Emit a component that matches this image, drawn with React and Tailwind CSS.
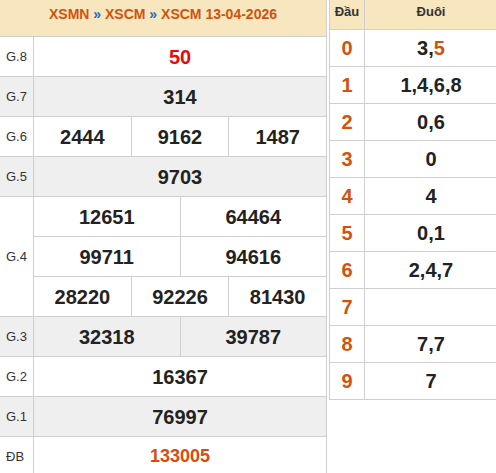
const PRIZES = [
  { label: 'G.8', rows: [['50']], tone: 'text-[#e8090b] text-[20px]' },
  { label: 'G.7', rows: [['314']], alt: true },
  { label: 'G.6', rows: [['2444', '9162', '1487']] },
  { label: 'G.5', rows: [['9703']], alt: true },
  { label: 'G.4', rows: [['12651', '64464'], ['99711', '94616'], ['28220', '92226', '81430']] },
  { label: 'G.3', rows: [['32318', '39787']], alt: true },
  { label: 'G.2', rows: [['16367']] },
  { label: 'G.1', rows: [['76997']], alt: true },
  { label: 'ĐB', rows: [['133005']], tone: 'text-[#dc4a0c] text-[18px]' },
]

const HEADS = [
  ['0', [['3'], ['5', true]]],
  ['1', [['1,4,6,8']]],
  ['2', [['0,6']]],
  ['3', [['0']]],
  ['4', [['4']]],
  ['5', [['0,1']]],
  ['6', [['2,4,7']]],
  ['7', []],
  ['8', [['7,7']]],
  ['9', [['7']]],
]

function PrizeRow({ prize }) {
  const bg = prize.alt ? 'bg-[#efefef]' : 'bg-white'
  const tone = prize.tone || 'text-[#222] text-[20px]'
  return (
    <div className={`flex ${bg}`}>
      <div className="w-[34px] shrink-0 flex items-center pl-[6px] border-r border-b border-[#cfcfcf] text-[13px] text-[#333]">
        {prize.label}
      </div>
      <div className="flex-1 flex flex-col">
        {prize.rows.map((cells, i) => (
          <div key={i} className="h-[40px] flex border-b border-[#cfcfcf]">
            {cells.map((n, j) => (
              <div
                key={n}
                className={`flex-1 basis-0 flex items-center justify-center font-bold ${tone} ${j > 0 ? 'border-l border-[#cfcfcf]' : ''}`}
              >
                {n}
              </div>
            ))}
          </div>
        ))}
      </div>
    </div>
  )
}

export default function App() {
  return (
    <div className="w-[496px] h-[473px] overflow-hidden bg-white flex items-start font-['Liberation_Sans',Arial,sans-serif]">
      {/* Results table */}
      <div className="w-[327px] h-[473px] shrink-0 border-r border-[#cfcfcf]">
        <div className="h-[37px] bg-[#f7e6be] border-b border-[#cfcfcf] pt-[6px] text-center text-[14px] leading-[16px] font-bold text-[#d2520d]">
          XSMN <span className="text-[#1d6db5]">»</span> XSCM <span className="text-[#1d6db5]">»</span> XSCM 13-04-2026
        </div>
        {PRIZES.map(p => <PrizeRow key={p.label} prize={p} />)}
      </div>

      {/* Head / tail table */}
      <div className="ml-[2px] w-[168px] shrink-0 border-l border-[#cfcfcf]">
        <div className="h-[30px] flex bg-[#f7e6be] border-b border-[#cfcfcf] text-[13px] leading-[16px] font-bold text-[#333]">
          <div className="w-[35px] shrink-0 border-r border-[#cfcfcf] pt-[4px] text-center">Đầu</div>
          <div className="flex-1 pt-[4px] text-center">Đuôi</div>
        </div>
        {HEADS.map(([head, tails]) => (
          <div key={head} className="h-[37px] flex border-b border-[#cfcfcf] text-[20px] font-bold">
            <div className="w-[35px] shrink-0 border-r border-[#cfcfcf] flex items-center justify-center text-[#d2520d]">
              {head}
            </div>
            <div className="flex-1 flex items-center justify-center text-[#222]">
              {tails.map(([t, hot], i) => (
                <span key={i}>
                  {i > 0 && ','}
                  <span className={hot ? 'text-[#d2520d]' : ''}>{t}</span>
                </span>
              ))}
            </div>
          </div>
        ))}
      </div>
    </div>
  )
}
